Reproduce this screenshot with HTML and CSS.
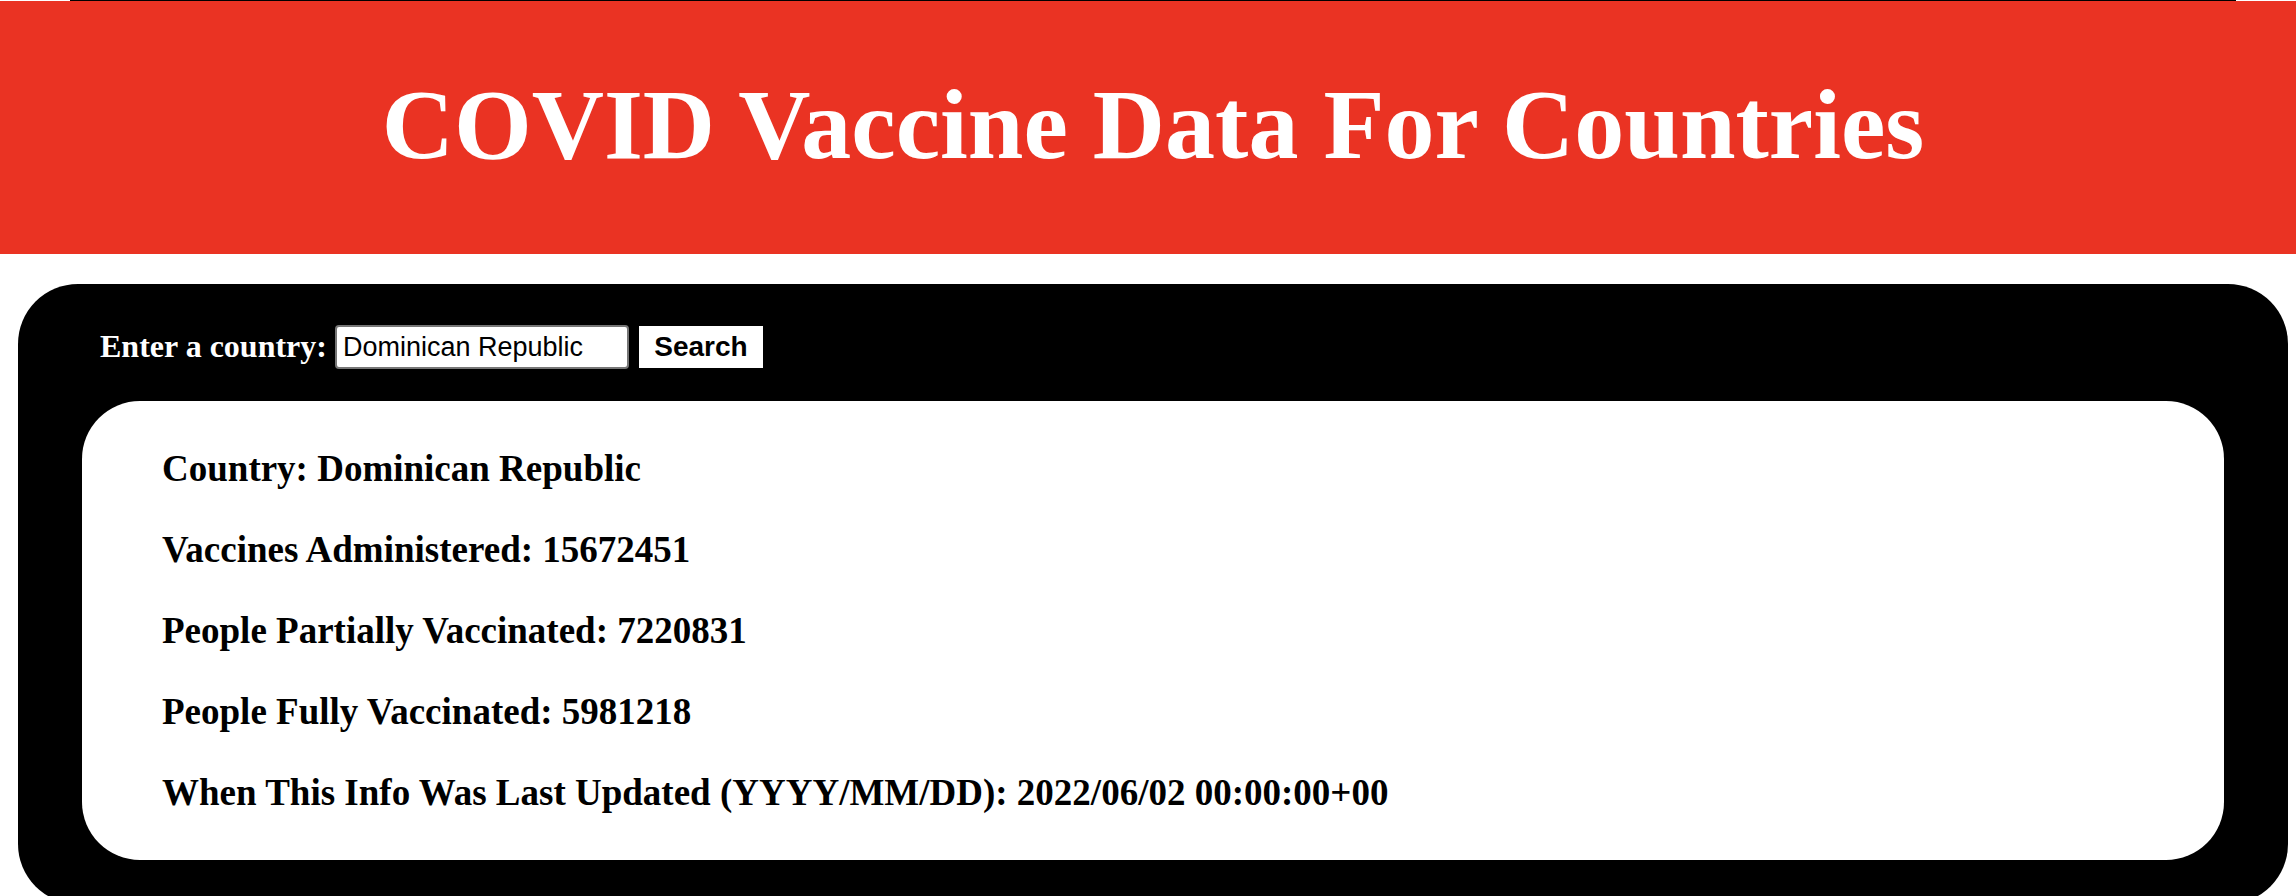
FILE: index.html
```html
<!DOCTYPE html>
<html lang="en">
<head>
<meta charset="utf-8">
<title>COVID Vaccine Data For Countries</title>
<link rel="stylesheet" href="styles.css">
</head>
<body>
<div class="edge"></div>
<header class="banner"><h1 class="title">COVID Vaccine Data For Countries</h1></header>
<main class="panel">
<form class="search">
<label class="search-label" for="country">Enter a country:</label>
<input class="search-input" id="country" type="text" value="Dominican Republic">
<button class="search-button" type="button">Search</button>
</form>
<section class="results">
<p class="result">Country: Dominican Republic</p>
<p class="result">Vaccines Administered: 15672451</p>
<p class="result">People Partially Vaccinated: 7220831</p>
<p class="result">People Fully Vaccinated: 5981218</p>
<p class="result">When This Info Was Last Updated (YYYY/MM/DD): 2022/06/02 00:00:00+00</p>
</section>
</main>
</body>
</html>
```
FILE: styles.css
```css
* { box-sizing: border-box; }
body {
  margin: 0;
  background: #fff;
  font-family: "Liberation Serif", "Times New Roman", serif;
  font-weight: bold;
}
.edge {
  height: 1px;
  margin: 0 60px 0 70px;
  background: #000;
}
.banner {
  padding: 69px 16px 74px 26px;
  background: #ea3323;
  color: #fff;
  text-align: center;
}
.title { margin: 0; font-size: 100px; line-height: 110px; }
.panel {
  margin: 30px 8px 0 18px;
  padding: 41px 64px 44px;
  border-radius: 60px;
  background: #000;
}
.search {
  display: flex;
  align-items: center;
  padding-left: 18px;
  color: #fff;
}
.search-label {
  margin-right: 8px;
  padding-bottom: 2px;
  font-size: 32px;
  line-height: 40px;
}
.search-input {
  width: 294px;
  height: 44px;
  margin-right: 10px;
  padding: 2px 6px;
  border: 2px solid #767676;
  border-radius: 4px;
  background: #fff;
  color: #000;
  font: 27px "Liberation Sans", Arial, sans-serif;
}
.search-button {
  width: 124px;
  height: 42px;
  padding: 0;
  border: 0;
  background: #fff;
  color: #000;
  font: bold 28px "Liberation Sans", Arial, sans-serif;
}
.results {
  margin-top: 32px;
  padding: 47px 80px 46px;
  border-radius: 58px;
  background: #fff;
  color: #000;
}
.result { margin: 0 0 39px; font-size: 37px; line-height: 42px; }
.result:last-child { margin-bottom: 0; }
```
